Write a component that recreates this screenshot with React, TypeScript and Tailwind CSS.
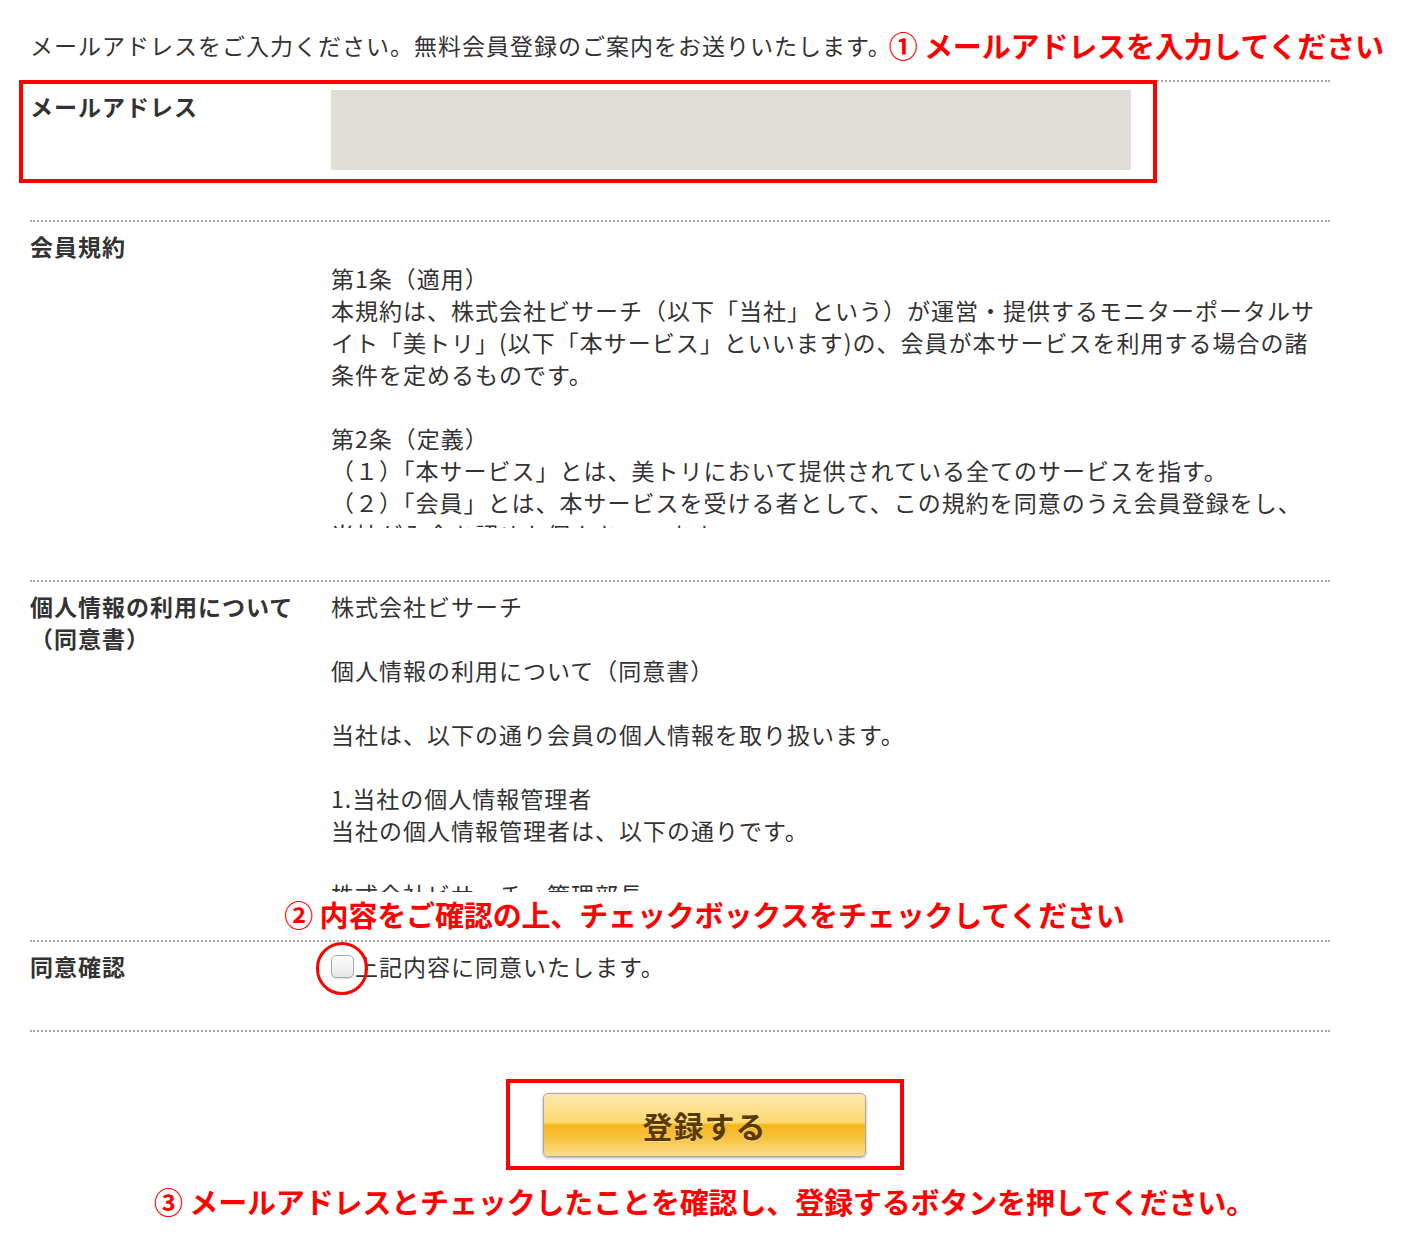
import React from "react";

const body = "text-[23px] leading-[32px] tracking-[1px] text-[#333333]";
const label = "w-[301px] shrink-0 text-[23px] leading-[32px] tracking-[1px] font-bold text-[#333333]";
const note = "text-[29px] leading-[36px] font-bold tracking-[-0.15px] text-[#ff0000] whitespace-nowrap";
const row = "flex border-t-2 border-dotted border-[#a8a8a8]";

const terms = [
  "第1条（適用）",
  "本規約は、株式会社ビサーチ（以下「当社」という）が運営・提供するモニターポータルサ",
  "イト「美トリ」(以下「本サービス」といいます)の、会員が本サービスを利用する場合の諸",
  "条件を定めるものです。",
  "",
  "第2条（定義）",
  "（１）「本サービス」とは、美トリにおいて提供されている全てのサービスを指す。",
  "（２）「会員」とは、本サービスを受ける者として、この規約を同意のうえ会員登録をし、",
  "当社が入会を認めた個人をいいます。",
  "",
  "第3条（会員登録）",
];

const privacy = [
  "株式会社ビサーチ",
  "",
  "個人情報の利用について（同意書）",
  "",
  "当社は、以下の通り会員の個人情報を取り扱います。",
  "",
  "1.当社の個人情報管理者",
  "当社の個人情報管理者は、以下の通りです。",
  "",
  "株式会社ビサーチ　管理部長",
  "",
];

function Lines({ lines }: { lines: string[] }) {
  return (
    <>
      {lines.map((l, i) => (
        <div key={i} className="h-[32px] whitespace-nowrap">
          {l}
        </div>
      ))}
    </>
  );
}

export default function App() {
  return (
    <div className="relative w-[1409px] h-[1241px] bg-white font-['Noto_Sans_CJK_JP','Noto_Sans',sans-serif]">
      <div className="pl-[30px] pt-[26px] w-[1330px]">
        <div className="mb-[16px] h-[38px] flex items-center whitespace-nowrap">
          <span className={body}>メールアドレスをご入力ください。無料会員登録のご案内をお送りいたします。</span>
          <span className={`${note} -ml-[3px]`}>① メールアドレスを入力してください</span>
        </div>

        <div className={`${row} pt-[8px] pb-[50px]`}>
          <div className={label}>メールアドレス</div>
          <div className="w-[800px] h-[80px] bg-[#e0ddd6]" />
        </div>

        <div className={`${row} pt-[8px] pb-[52px]`}>
          <div className={label}>会員規約</div>
          <div className={`${body} mt-[32px] h-[266px] overflow-hidden flex-1`}>
            <Lines lines={terms} />
          </div>
        </div>

        <div className={`${row} pt-[8px] pb-[48px]`}>
          <div className={label}>
            個人情報の利用について
            <br />
            （同意書）
          </div>
          <div className={`${body} h-[302px] overflow-hidden flex-1`}>
            <Lines lines={privacy} />
          </div>
        </div>

        <div className={`${row} border-b-2 pt-[8px] pb-[48px]`}>
          <div className={label}>同意確認</div>
          <div className={`${body} flex items-center h-[32px]`}>
            <span className="block w-[23px] h-[23px] rounded-[5px] border border-[#a9a9a9] bg-[linear-gradient(to_bottom,#ffffff,#e6e6e6)] shadow-[0_1px_1px_rgba(0,0,0,0.12)]" />
            <span className="ml-[1px]">上記内容に同意いたします。</span>
          </div>
        </div>
      </div>

      <div className="w-full flex flex-col items-center mt-[47px]">
        <div className="w-[398px] h-[91px] border-4 border-[#ff0000] flex items-center justify-center">
          <button className="w-[323px] h-[64px] rounded-[5px] border border-[#a9a9a9] shadow-[0_1px_3px_rgba(0,0,0,0.35)] bg-[linear-gradient(to_bottom,#fde9af_0%,#fbd870_46%,#f6b61a_50%,#f8c342_72%,#fcdc8c_100%)] text-[30px] leading-[36px] font-bold text-[#5a3906] tracking-[1px] [text-shadow:0_1px_0_rgba(255,255,255,0.45)]">
            登録する
          </button>
        </div>
        <div className={`${note} mt-[13px]`}>③ メールアドレスとチェックしたことを確認し、登録するボタンを押してください。</div>
      </div>

      <div className={`${note} absolute top-[896px] left-0 w-full text-center`}>② 内容をご確認の上、チェックボックスをチェックしてください</div>
      <div className="absolute left-[19px] top-[80px] w-[1138px] h-[103px] border-4 border-[#ff0000]" />
      <div className="absolute left-[316px] top-[942px] w-[52px] h-[53px] border-[3px] border-[#ff0000] rounded-full" />
    </div>
  );
}
